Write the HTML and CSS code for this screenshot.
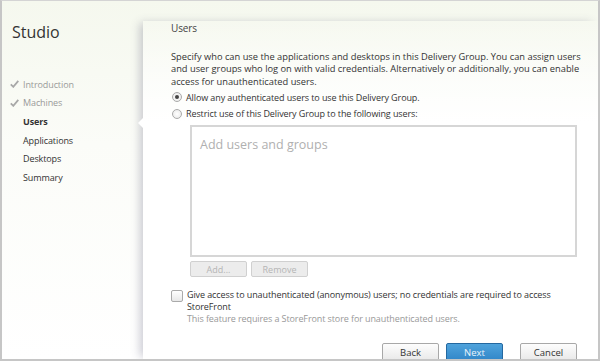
FILE: index.html
```html
<!DOCTYPE html>
<html lang="en">
<head>
  <meta charset="UTF-8" />
  <title>Studio - Users</title>
  <link rel="stylesheet" href="styles.css">
</head>
<body>

  <div class="window">
    <aside class="sidebar">
      <div class="brand">Studio</div>
      <ul class="steps">
        <li class="step done">
          <svg class="tick" width="9" height="8" viewBox="0 0 9 8"><path d="M0.8 4.3 L3.3 6.8 L8.3 0.9" fill="none" stroke="#a8a8a8" stroke-width="1.8"/></svg>
          Introduction
        </li>
        <li class="step done">
          <svg class="tick" width="9" height="8" viewBox="0 0 9 8"><path d="M0.8 4.3 L3.3 6.8 L8.3 0.9" fill="none" stroke="#a8a8a8" stroke-width="1.8"/></svg>
          Machines
        </li>
        <li class="step current"><span class="tick"></span>Users</li>
        <li class="step"><span class="tick"></span>Applications</li>
        <li class="step"><span class="tick"></span>Desktops</li>
        <li class="step"><span class="tick"></span>Summary</li>
      </ul>
    </aside>

    <main class="panel">
      <div class="notch"></div>

      <h1 class="title">Users</h1>
      <p class="intro">
        Specify who can use the applications and desktops in this Delivery Group. You can assign users
        and user groups who log on with valid credentials. Alternatively or additionally, you can enable
        access for unauthenticated users.
      </p>

      <label class="option first">
        <span class="radio checked"></span>
        Allow any authenticated users to use this Delivery Group.
      </label>
      <label class="option">
        <span class="radio"></span>
        Restrict use of this Delivery Group to the following users:
      </label>

      <div class="user-list">Add users and groups</div>
      <div class="list-actions">
        <button class="btn-small">Add...</button>
        <button class="btn-small">Remove</button>
      </div>

      <div class="anon">
        <span class="checkbox"></span>
        <div class="anon-text">
          Give access to unauthenticated (anonymous) users; no credentials are required to access<br />
          StoreFront
          <div class="note">This feature requires a StoreFront store for unauthenticated users.</div>
        </div>
      </div>

      <div class="footer">
        <button class="btn">Back</button>
        <button class="btn primary">Next</button>
        <button class="btn cancel">Cancel</button>
      </div>
    </main>
  </div>

</body>
</html>
```

FILE: styles.css
```css
body {
  margin: 0;
  padding: 0;
  font-family: 'Open Sans', 'Noto Sans', sans-serif;
  color: #333;
}

.window {
  width: 600px;
  height: 361px;
  box-sizing: border-box;
  border: 2px solid #c6c6c6;
  border-top: 1px solid #d4d4d4;
  background: linear-gradient(to bottom, #f5f8ee, #fbfcf8 40%, #fff);
  display: flex;
  overflow: hidden;
}

.sidebar {
  width: 141px;
  flex-shrink: 0;
  padding-top: 21px;
}

.brand {
  padding-left: 10px;
  font-size: 16px;
  line-height: 20px;
  color: #333;
}

.steps {
  list-style: none;
  margin: 33px 0 0;
  padding: 0;
}

.step {
  display: flex;
  align-items: center;
  height: 18.6px;
  font-size: 9px;
  letter-spacing: -0.1px;
  color: #333;
}

.step .tick {
  width: 9px;
  margin: 0 4px 0 8px;
}

.step.done {
  color: #9a9a9a;
}

.step.current {
  font-weight: bold;
}

.panel {
  flex: 1;
  position: relative;
  margin-top: 20px;
  padding: 0 21px 0 28px;
  box-shadow: -5px 0 9px -2px rgba(70, 70, 100, 0.28);
  background: linear-gradient(to bottom, rgba(255,255,255,0), #fff 30%);
  font-size: 9px;
  letter-spacing: -0.1px;
}

.notch {
  position: absolute;
  left: -5px;
  top: 97px;
  width: 0;
  height: 0;
  border-top: 5px solid transparent;
  border-bottom: 5px solid transparent;
  border-right: 5px solid #fff;
}

.title {
  margin: 0;
  font-size: 10px;
  font-weight: normal;
  line-height: 14px;
  color: #444;
}

.intro {
  margin: 16px -22px 0 0;
  font-size: 9.3px;
  letter-spacing: 0;
  line-height: 12.4px;
}

.option {
  display: flex;
  align-items: center;
  height: 16.5px;
}

.option.first {
  margin-top: 1px;
}

.radio {
  width: 8px;
  height: 8px;
  margin: 0 4px 0 1px;
  border: 1px solid #aaa;
  border-radius: 50%;
  background: radial-gradient(#fff, #e6e6e6);
  position: relative;
}

.radio.checked::after {
  content: "";
  position: absolute;
  left: 2px;
  top: 2px;
  width: 4px;
  height: 4px;
  border-radius: 50%;
  background: #444;
}

.user-list {
  margin: 3px 0 0 19px;
  border: 2px solid #d6d6d6;
  padding: 9px 8px;
  box-sizing: border-box;
  height: 132px;
  font-size: 12.5px;
  letter-spacing: 0;
  color: #b0b0b0;
  background: rgba(255, 255, 255, 0.6);
}

.list-actions {
  display: flex;
  gap: 4px;
  margin: 4px 0 0 19px;
}

.btn-small {
  width: 57px;
  height: 16px;
  padding: 0;
  font-family: inherit;
  font-size: 9px;
  color: #b5b5b5;
  background: #ececec;
  border: 1px solid #d0d0d0;
  border-radius: 2px;
}

.anon {
  display: flex;
  margin-top: 12px;
}

.checkbox {
  width: 10px;
  height: 10px;
  margin: 1px 4px 0 0;
  flex-shrink: 0;
  border: 1px solid #aaa;
  border-radius: 2px;
  background: linear-gradient(#fff, #e8e8e8);
}

.anon-text {
  line-height: 12px;
}

.note {
  color: #999;
}

.footer {
  display: flex;
  justify-content: flex-end;
  margin-top: 18px;
}

.btn {
  width: 57px;
  height: 22px;
  padding: 0 0 4px;
  font-family: inherit;
  font-size: 9.5px;
  color: #333;
  border: 1px solid #a8a8a8;
  border-radius: 2px;
  background: linear-gradient(#fdfdfd, #e4e4e4);
}

.btn.primary {
  margin-left: 7px;
  color: #e8f3fb;
  border-color: #2468a0;
  background: linear-gradient(#4fa3dc, #2b80c4);
}

.btn.cancel {
  margin-left: 17px;
}
```
